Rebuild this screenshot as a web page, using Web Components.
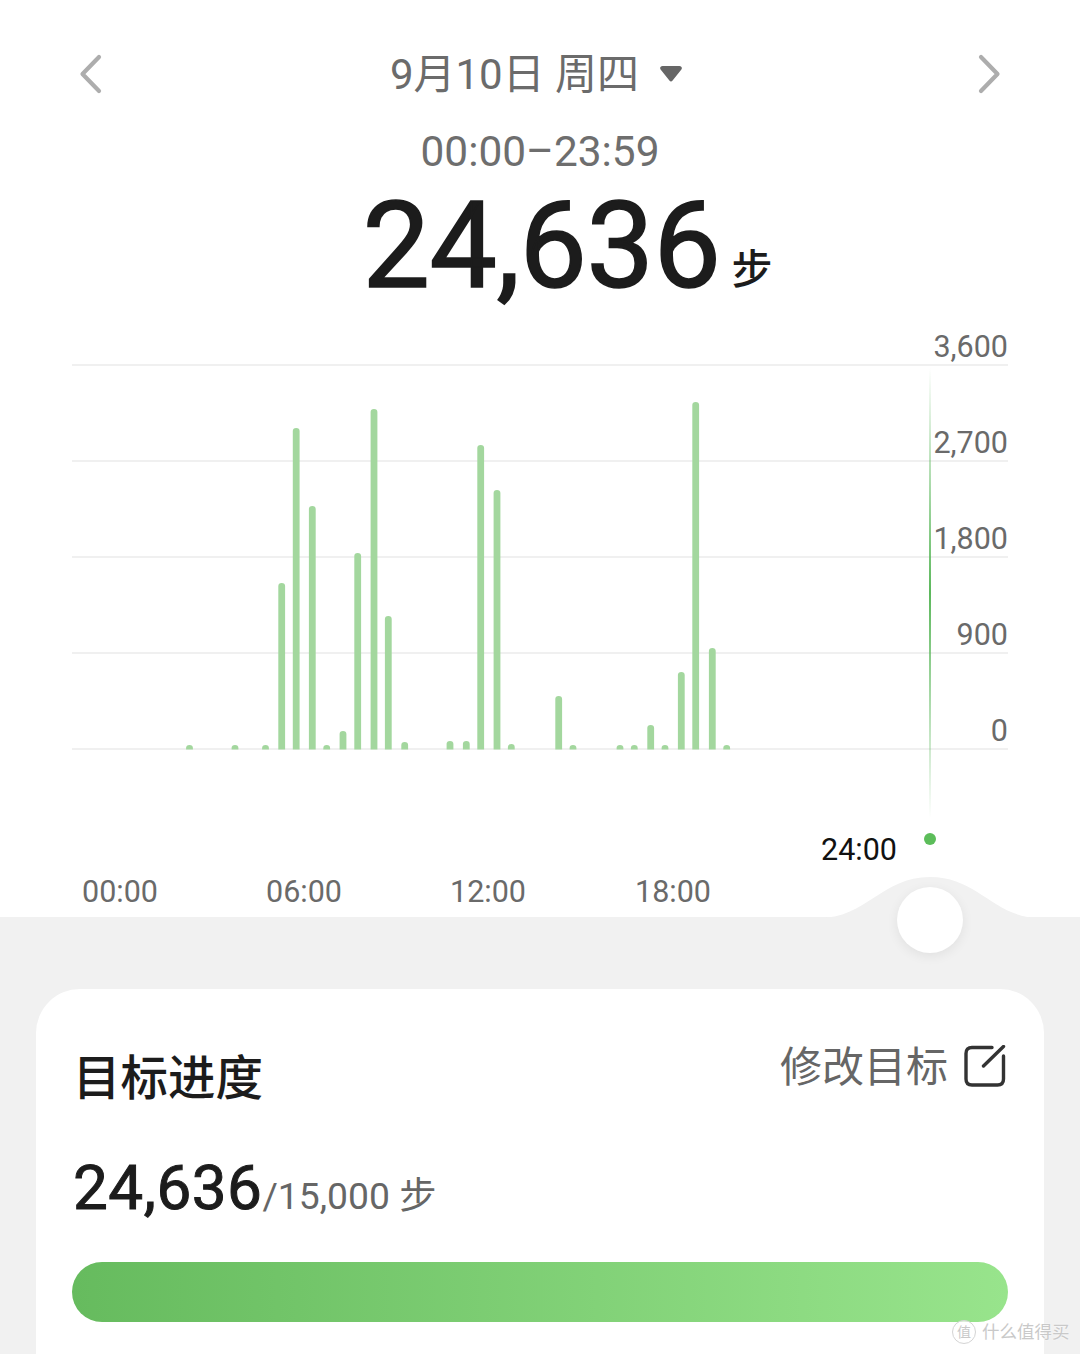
<!DOCTYPE html>
<html lang="zh">
<head>
<meta charset="utf-8">
<title>步数</title>
<style>
  html, body { margin: 0; background: #fff; }
  body { font-family: Roboto, "Noto Sans CJK SC", sans-serif; }
</style>
</head>
<body>
<step-page>
  <day-nav date="9月10日 周四"></day-nav>
  <step-total range="00:00–23:59" value="24,636"></step-total>
  <step-chart></step-chart>
  <goal-card></goal-card>
  <brand-mark></brand-mark>
</step-page>

<script>
'use strict';

const CJK = 'Roboto, "Noto Sans CJK SC", sans-serif';

class StepPage extends HTMLElement {
  constructor() {
    super();
    this.attachShadow({ mode: 'open' }).innerHTML = `
      <style>
        :host {
          display: block;
          position: relative;
          width: 1080px;
          height: 1354px;
          overflow: hidden;
          background: #fff;
          font-family: ${CJK};
        }
      </style>
      <slot></slot>
    `;
  }
}

class DayNav extends HTMLElement {
  constructor() {
    super();
    this.attachShadow({ mode: 'open' }).innerHTML = `
      <style>
        :host {
          display: flex;
          align-items: center;
          justify-content: space-between;
          height: 60px;
          padding: 44px 78px 0;
          color: #6b6b6b;
        }
        svg { display: block; }
        .date {
          display: flex;
          align-items: center;
          gap: 21px;
          font-size: 42px;
          line-height: 62px;
          margin-right: 8px;
          padding-top: 2px;
        }
        .date svg { margin-top: -2px; }
      </style>
      <svg width="26" height="44" viewBox="0 0 26 44" fill="none" stroke="#adadad" stroke-width="4.2" stroke-linecap="round" stroke-linejoin="round">
        <path d="M21 5 L4.5 22 L21 39"/>
      </svg>
      <div class="date">
        <span id="date"></span>
        <svg width="22" height="16" viewBox="0 0 22 16" fill="#666">
          <path d="M2.5 0 H19.5 C21.6 0 22.6 2.2 21.2 3.8 L12.6 14.6 C11.7 15.8 10.3 15.8 9.4 14.6 L0.8 3.8 C-0.6 2.2 0.4 0 2.5 0 Z"/>
        </svg>
      </div>
      <svg width="26" height="44" viewBox="0 0 26 44" fill="none" stroke="#adadad" stroke-width="4.2" stroke-linecap="round" stroke-linejoin="round">
        <path d="M5 5 L21.5 22 L5 39"/>
      </svg>
    `;
  }

  connectedCallback() {
    this.shadowRoot.getElementById('date').textContent = this.getAttribute('date');
  }
}

class StepTotal extends HTMLElement {
  constructor() {
    super();
    this.attachShadow({ mode: 'open' }).innerHTML = `
      <style>
        :host {
          display: block;
          height: 229px;
          text-align: center;
        }
        .range {
          padding-top: 18px;
          font-size: 42.4px;
          line-height: 60px;
          color: #6e6e6e;
        }
        .total {
          display: flex;
          justify-content: center;
          align-items: baseline;
          gap: 11px;
          padding-left: 55px;
          color: #1c1c1c;
        }
        .num {
          font-size: 120px;
          line-height: 129px;
          font-weight: 400;
          letter-spacing: -.5px;
          -webkit-text-stroke: 1.6px #1c1c1c;
        }
        .unit {
          font-size: 41px;
          font-weight: 500;
          transform: translateY(-3px);
        }
      </style>
      <div class="range" id="range"></div>
      <div class="total"><span class="num" id="num"></span><span class="unit">步</span></div>
    `;
  }

  connectedCallback() {
    this.shadowRoot.getElementById('range').textContent = this.getAttribute('range');
    this.shadowRoot.getElementById('num').textContent = this.getAttribute('value');
  }
}

// [centre x, top y] in page coordinates; every bar stands on y = 749
const BARS = [
  [189.5, 745], [235, 745], [265.5, 745], [281.7, 583], [296.2, 428], [312.3, 506],
  [326.7, 745], [343, 731], [357.7, 553], [374, 409], [388.3, 616], [404.7, 742],
  [450, 741], [466.3, 741], [480.7, 445], [497, 490], [511.3, 744], [558.7, 696],
  [573, 745], [620, 745], [634.3, 745], [650.7, 725], [665, 745], [681.3, 672],
  [695.7, 402], [712.3, 648], [726.7, 745],
];

const AXIS_Y = ['3,600', '2,700', '1,800', '900', '0'];
const AXIS_X = ['00:00', '06:00', '12:00', '18:00'];

class StepChart extends HTMLElement {
  constructor() {
    super();
    const bars = BARS.map(([x, top]) =>
      `<path d="M${x - 3.4} 749.5 V${top + 3} a3.4 3 0 0 1 6.8 0 V749.5 Z"/>`).join('');

    this.attachShadow({ mode: 'open' }).innerHTML = `
      <style>
        :host {
          display: block;
          position: relative;
          height: 584px;
          margin: 0 72px;
          font-size: 30.5px;
          color: #6a6a6a;
        }
        .rows {
          display: grid;
          grid-template-rows: 33px repeat(4, 96px);
        }
        .rows div {
          border-bottom: 2px solid #f0f0f0;
          text-align: right;
          line-height: 29px;
          display: flex;
          justify-content: flex-end;
          align-items: flex-end;
          padding-bottom: 3px;
          box-sizing: border-box;
        }
        .now {
          padding: 82px 0 0 749px;
          line-height: 36px;
          color: #111;
        }
        .ticks {
          display: grid;
          grid-template-columns: 184px 184px 185px 1fr;
          padding: 6px 0 0 10px;
          line-height: 36px;
        }
        svg {
          position: absolute;
          inset: 0;
        }
      </style>
      <div class="rows">${AXIS_Y.map(t => `<div>${t}</div>`).join('')}</div>
      <div class="now">24:00</div>
      <div class="ticks">${AXIS_X.map(t => `<span>${t}</span>`).join('')}</div>
      <svg width="936" height="584" viewBox="72 333 936 584">
        <defs>
          <linearGradient id="cursor" x1="0" y1="0" x2="0" y2="1">
            <stop offset="0" stop-color="#5cb85c" stop-opacity="0"/>
            <stop offset="0.5" stop-color="#5cb85c"/>
            <stop offset="1" stop-color="#5cb85c" stop-opacity="0"/>
          </linearGradient>
        </defs>
        <g fill="#a3d79e">${bars}</g>
        <rect x="929" y="368" width="2" height="450" fill="url(#cursor)"/>
        <circle cx="930" cy="839" r="6" fill="#5cbd5a"/>
      </svg>
    `;
  }
}

class GoalCard extends HTMLElement {
  constructor() {
    super();
    this.attachShadow({ mode: 'open' }).innerHTML = `
      <style>
        :host {
          display: block;
          position: relative;
          background: #f1f1f1;
          height: 437px;
          padding-top: 72px;
          box-sizing: border-box;
        }
        .bump {
          position: absolute;
          left: 810px;
          top: -42px;
        }
        .thumb {
          position: absolute;
          left: 897px;
          top: -30px;
          width: 66px;
          height: 66px;
          border-radius: 50%;
          background: #fff;
          box-shadow: 0 3px 12px rgba(0, 0, 0, .07);
        }
        .card {
          margin: 0 36px;
          height: 400px;
          padding: 0 36px;
          background: #fff;
          border-radius: 44px 44px 0 0;
        }
        .head {
          display: flex;
          justify-content: space-between;
          align-items: flex-start;
          padding: 50px 2px 0 1px;
        }
        h2 {
          margin: 0;
          font-size: 47.5px;
          line-height: 80px;
          font-weight: 500;
          color: #1c1c1c;
        }
        .edit {
          display: flex;
          align-items: center;
          gap: 16px;
          margin-top: 5px;
          height: 44px;
          font-size: 42px;
          color: #666;
        }
        .edit span { margin-top: -5px; }
        svg { display: block; }
        .count {
          display: flex;
          align-items: baseline;
          margin-top: 31px;
          padding-left: 1px;
          color: #666;
          font-size: 37.3px;
          white-space: pre;
        }
        .count b {
          font-size: 62px;
          line-height: 76px;
          font-weight: 400;
          letter-spacing: .5px;
          -webkit-text-stroke: 1px #1c1c1c;
          color: #1c1c1c;
        }
        .bar {
          height: 60px;
          margin-top: 36px;
          border-radius: 30px;
          background: linear-gradient(90deg, #66bb5e, #98e48c);
        }
      </style>
      <svg class="bump" width="240" height="43" viewBox="810 875 240 43" fill="#f1f1f1">
        <path d="M820 918 C866 918 882 877 930 877 C978 877 994 918 1040 918 Z"/>
      </svg>
      <div class="thumb"></div>
      <div class="card">
        <div class="head">
          <h2>目标进度</h2>
          <div class="edit">
            <span>修改目标</span>
            <svg width="42" height="42" viewBox="0 0 42 42" fill="none" stroke="#333" stroke-width="3.4" stroke-linecap="round">
              <path d="M28 2.5 H8 Q2 2.5 2 8.5 V34 Q2 40 8 40 H33.5 Q39.5 40 39.5 34 V11"/>
              <path d="M19.5 21 L39.5 1.5"/>
            </svg>
          </div>
        </div>
        <div class="count"><b>24,636</b><span>/15,000 步</span></div>
        <div class="bar"></div>
      </div>
    `;
  }
}

class BrandMark extends HTMLElement {
  constructor() {
    super();
    this.attachShadow({ mode: 'open' }).innerHTML = `
      <style>
        :host {
          position: absolute;
          left: 952px;
          top: 1319px;
          display: flex;
          align-items: center;
          gap: 6px;
          font-size: 17.5px;
          line-height: 26px;
          color: #c9c9c9;
          text-shadow: 0 0 2px #fff;
        }
        .seal {
          width: 22px;
          height: 22px;
          border-radius: 50%;
          border: 1px solid #d4d4d4;
          background: rgba(255, 255, 255, .7);
          font-size: 14px;
          line-height: 22px;
          text-align: center;
        }
      </style>
      <span class="seal">值</span><span>什么值得买</span>
    `;
  }
}

customElements.define('step-page', StepPage);
customElements.define('day-nav', DayNav);
customElements.define('step-total', StepTotal);
customElements.define('step-chart', StepChart);
customElements.define('goal-card', GoalCard);
customElements.define('brand-mark', BrandMark);
</script>
</body>
</html>
